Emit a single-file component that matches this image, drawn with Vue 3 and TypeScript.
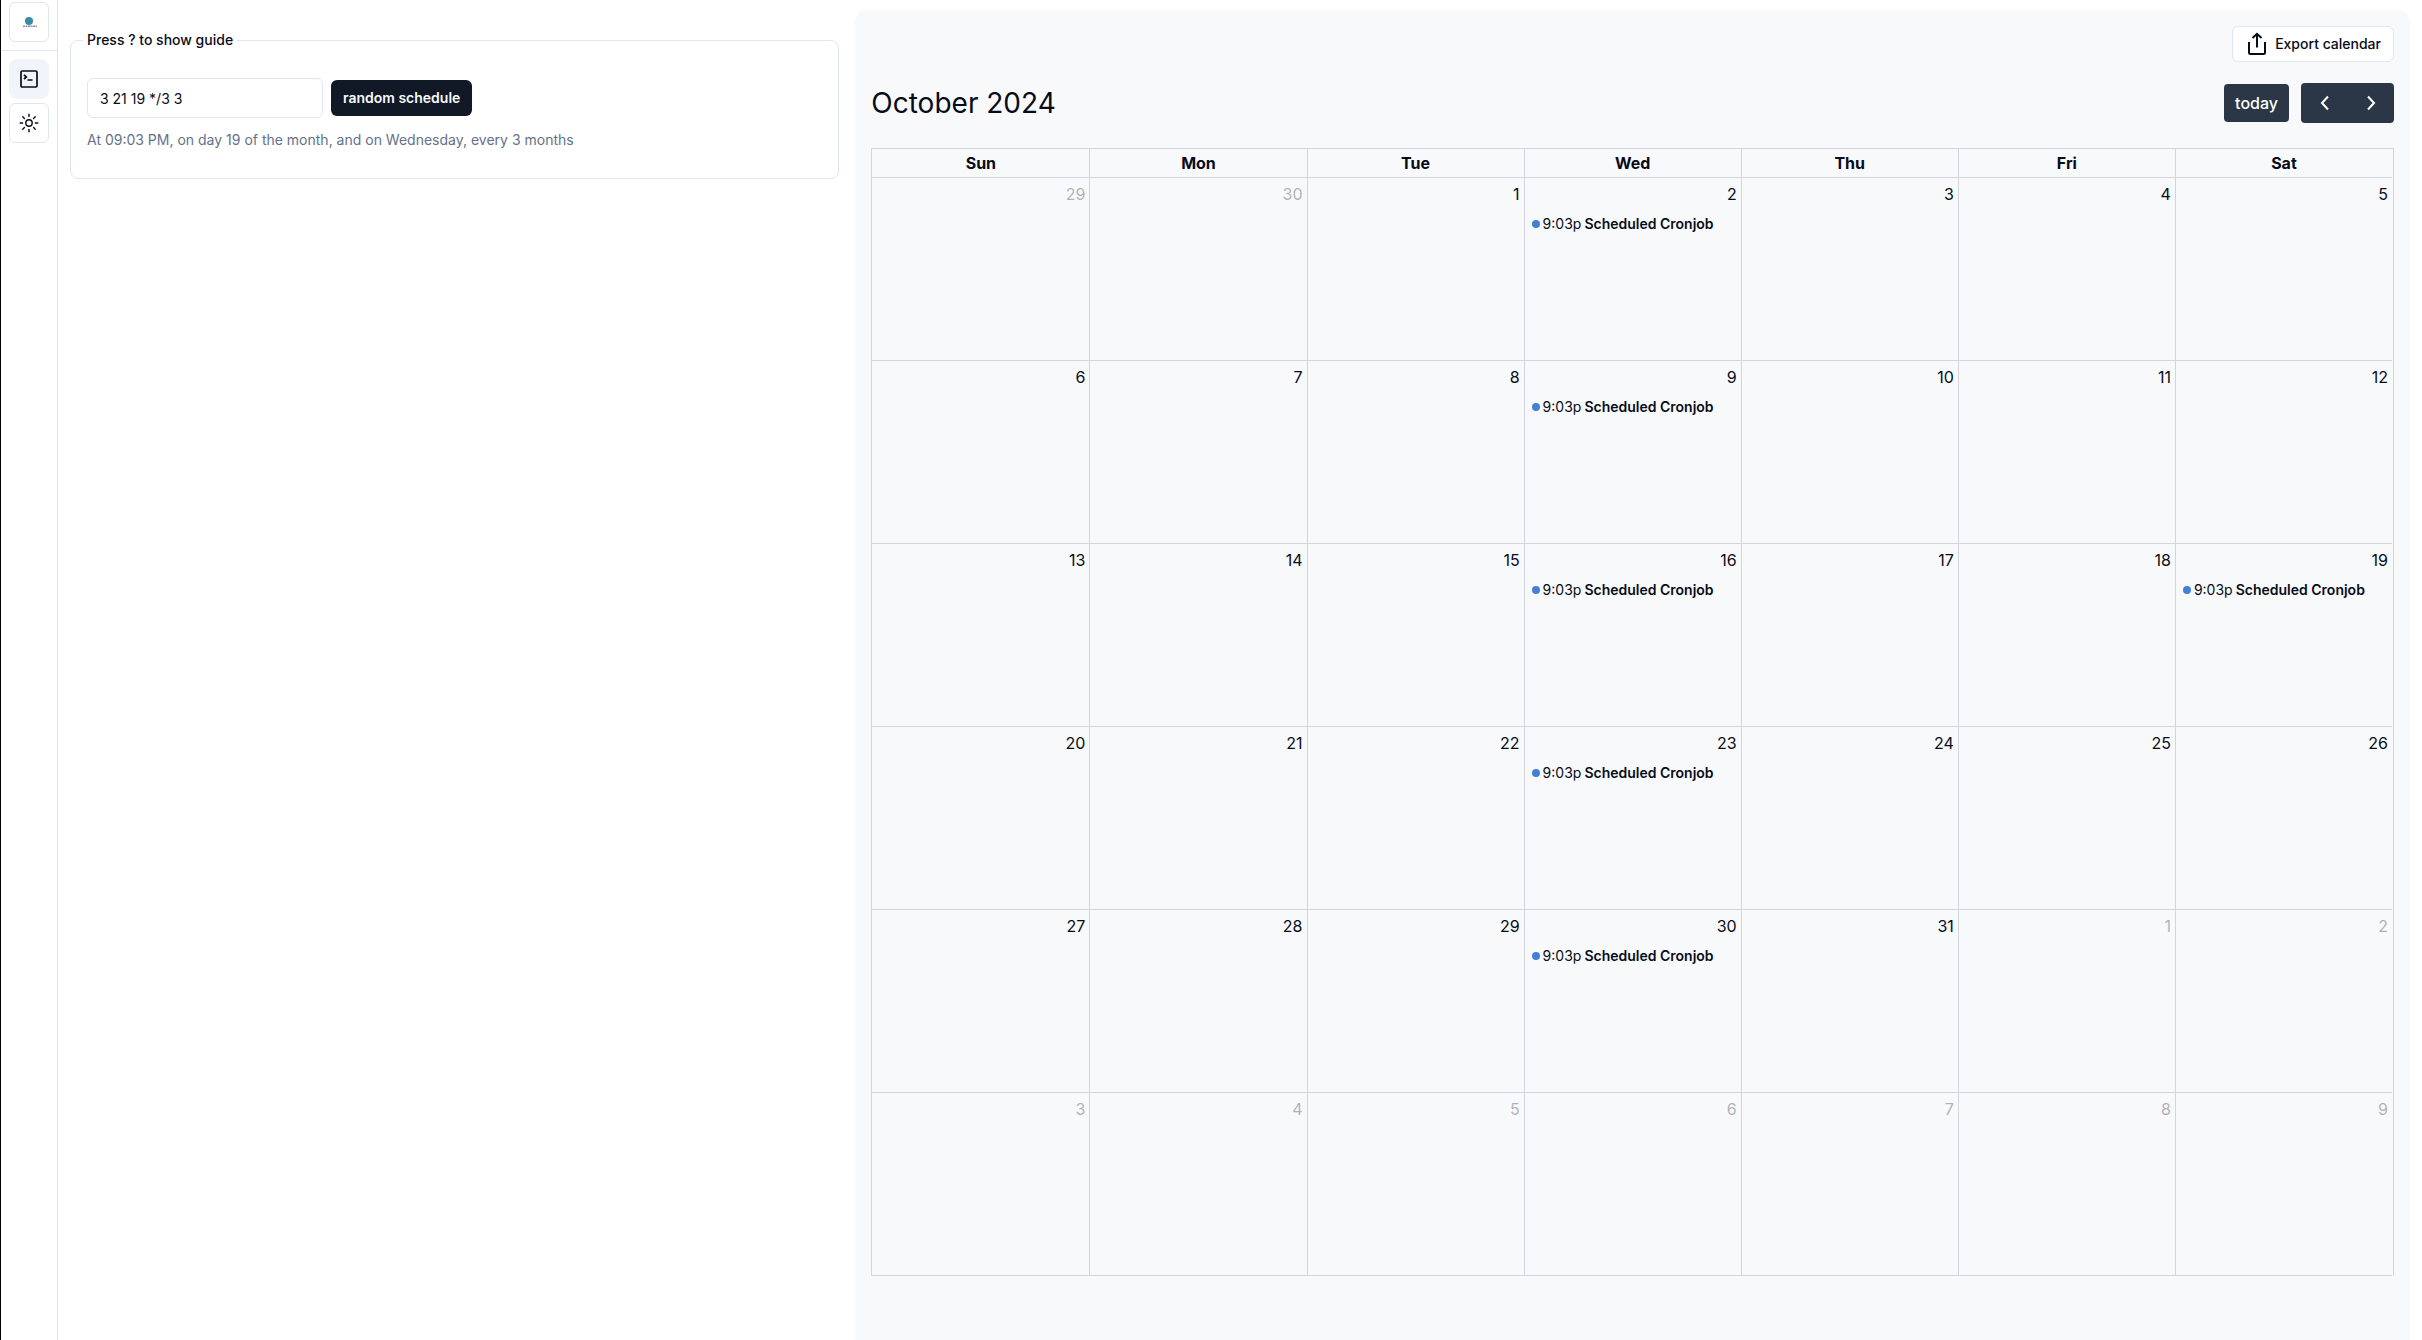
<script setup lang="ts">
import { computed, ref } from 'vue'

interface Day {
  key: string
  label: number
  outside: boolean
  scheduled: boolean
}

const weekdays = ['Sun', 'Mon', 'Tue', 'Wed', 'Thu', 'Fri', 'Sat']
const monthNames = ['January', 'February', 'March', 'April', 'May', 'June', 'July',
  'August', 'September', 'October', 'November', 'December']

const expression = ref('3 21 19 */3 3')
const description = 'At 09:03 PM, on day 19 of the month, and on Wednesday, every 3 months'
const current = ref(new Date(2024, 9, 1))

const title = computed(() => `${monthNames[current.value.getMonth()]} ${current.value.getFullYear()}`)

const weeks = computed<Day[][]>(() => {
  const year = current.value.getFullYear()
  const month = current.value.getMonth()
  const offset = new Date(year, month, 1).getDay()
  return Array.from({ length: 6 }, (_, w) =>
    Array.from({ length: 7 }, (_, d) => {
      const date = new Date(year, month, 1 - offset + w * 7 + d)
      const inCycle = date.getMonth() % 3 === 0
      return {
        key: date.toDateString(),
        label: date.getDate(),
        outside: date.getMonth() !== month,
        scheduled: inCycle && (date.getDay() === 3 || date.getDate() === 19),
      }
    }),
  )
})

function shift(months: number) {
  current.value = new Date(current.value.getFullYear(), current.value.getMonth() + months, 1)
}

function today() {
  const now = new Date()
  current.value = new Date(now.getFullYear(), now.getMonth(), 1)
}

function randomSchedule() {
  const pick = (n: number) => Math.floor(Math.random() * n)
  expression.value = `${pick(60)} ${pick(24)} ${pick(28) + 1} */${pick(5) + 1} ${pick(7)}`
}
</script>

<template>
  <div class="app">
    <aside class="sidebar">
      <div class="brand">
        <button class="icon-button" type="button" aria-label="Home">
          <svg width="20" height="20" viewBox="0 0 20 20">
            <circle cx="10" cy="9" r="4" fill="#3a8aa8" />
            <path d="M4 14.2h14" stroke="#8d9499" stroke-width="1.4" stroke-dasharray="2 .5" />
          </svg>
        </button>
      </div>
      <nav class="tools">
        <button class="icon-button active" type="button" aria-label="Editor">
          <svg width="20" height="20" viewBox="0 0 20 20" fill="none" stroke="currentColor" stroke-width="1.7">
            <rect x="2" y="2" width="16" height="16" rx="1.2" />
            <path d="M5 5.8l2.3 2.1L5 10M8.5 11h5" />
          </svg>
        </button>
        <button class="icon-button" type="button" aria-label="Toggle theme">
          <svg width="20" height="20" viewBox="0 0 20 20" fill="none" stroke="currentColor" stroke-width="1.4" stroke-linecap="round">
            <circle cx="10" cy="10" r="3.2" />
            <path d="M10 1.2v2.4M10 16.4v2.4M1.2 10h2.4M16.4 10h2.4M3.8 3.8l1.6 1.6M14.6 14.6l1.6 1.6M3.8 16.2l1.6-1.6M14.6 5.4l1.6-1.6" />
          </svg>
        </button>
      </nav>
    </aside>

    <main class="content">
      <form class="editor" @submit.prevent>
        <fieldset class="card">
          <legend>Press ? to show guide</legend>
          <div class="row">
            <input v-model="expression" class="field" type="text" aria-label="Cron expression" />
            <button class="primary" type="button" @click="randomSchedule">random schedule</button>
          </div>
          <p class="description">{{ description }}</p>
        </fieldset>
      </form>

      <section class="panel">
        <button class="export" type="button">
          <svg width="20" height="24" viewBox="0 0 20 24" fill="none" stroke="currentColor" stroke-width="2">
            <path d="M2 10v10.5a1.5 1.5 0 0 0 1.500 1.500h13a1.500 1.500 0 0 0 1.500-1.500V10M10 15.500V2M5.500 6 10 1.800 14.500 6" />
          </svg>
          Export calendar
        </button>

        <header class="toolbar">
          <h2>{{ title }}</h2>
          <div class="controls">
            <button class="today" type="button" @click="today">today</button>
            <div class="pager">
              <button type="button" aria-label="Previous month" @click="shift(-1)">
                <svg width="10" height="16" viewBox="0 0 10 16"><path d="M8 1.500 2 8l6 6.500" /></svg>
              </button>
              <button type="button" aria-label="Next month" @click="shift(1)">
                <svg width="10" height="16" viewBox="0 0 10 16"><path d="M2 1.500 8 8l-6 6.500" /></svg>
              </button>
            </div>
          </div>
        </header>

        <div class="frame">
          <table class="calendar">
            <thead>
              <tr>
                <th v-for="name in weekdays" :key="name" scope="col">{{ name }}</th>
              </tr>
            </thead>
            <tbody>
              <tr v-for="(week, i) in weeks" :key="i">
                <td v-for="day in week" :key="day.key">
                  <div class="number" :class="{ outside: day.outside }">{{ day.label }}</div>
                  <a v-if="day.scheduled" class="event" href="#">
                    <span class="dot"></span>
                    <span>9:03p</span>
                    <strong>Scheduled Cronjob</strong>
                  </a>
                </td>
              </tr>
            </tbody>
          </table>
        </div>
      </section>
    </main>
  </div>
</template>

<style>
body {
  background: #fff;
}
</style>

<style scoped>
.app,
.app * {
  box-sizing: border-box;
}

.app {
  display: flex;
  min-height: 100vh;
  border-left: 1px solid #000;
  color: #080c18;
  font-family: Inter, "Liberation Sans", sans-serif;
  font-size: 14px;
  line-height: 20px;
}

button,
input {
  font: inherit;
  color: inherit;
}

button {
  display: flex;
  align-items: center;
  justify-content: center;
  padding: 0;
  border: 0;
  cursor: pointer;
}

.sidebar {
  flex: none;
  width: 57px;
  border-right: 1px solid #e0e4ee;
}

.brand {
  display: flex;
  justify-content: center;
  padding: 2px 8px 8px;
  border-bottom: 1px solid #e0e6ee;
}

.tools {
  display: grid;
  gap: 4px;
  padding: 8px;
}

.icon-button {
  width: 40px;
  height: 40px;
  border: 1px solid #e0e6ee;
  border-radius: 6px;
  background: #fff;
}

.icon-button.active {
  border-color: #f1f4f9;
  border-radius: 8px;
  background: #f1f4f9;
}

.content {
  flex: 1;
  display: grid;
  grid-template-columns: repeat(3, minmax(0, 1fr));
  gap: 16px;
  padding: 10px 12px 0;
}

.editor {
  padding-top: 20px;
}

.card {
  min-width: 0;
  margin: 0;
  padding: 28px 16px;
  border: 1px solid #e0e6ee;
  border-radius: 8px;
}

legend {
  margin-left: -4px;
  padding: 0 4px;
  font-weight: 500;
}

.row {
  display: flex;
  align-items: center;
  gap: 8px;
}

.field {
  width: 236px;
  height: 40px;
  padding: 8px 12px;
  border: 1px solid #e0e6ee;
  border-radius: 6px;
  background: #fff;
}

.primary {
  height: 36px;
  padding: 0 12px;
  border-radius: 6px;
  background: #111826;
  color: #f8fafc;
  font-weight: 600;
}

.description {
  margin: 12px 0 0;
  color: #64728a;
}

.panel {
  grid-column: span 2;
  padding: 16px;
  border-radius: 12px 12px 0 0;
  background: #f8f9fb;
}

.export {
  gap: 8px;
  height: 36px;
  margin-left: auto;
  padding: 0 12px 0 14px;
  border: 1px solid #e0e6ee;
  border-radius: 6px;
  background: #fff;
  font-weight: 500;
}

.toolbar {
  display: flex;
  align-items: center;
  justify-content: space-between;
  margin: 21px 0 25px;
}

h2 {
  margin: 0;
  font-size: 28px;
  line-height: 40px;
  font-weight: 400;
}

.controls {
  display: flex;
  align-items: center;
  gap: 12px;
}

.today {
  height: 38px;
  padding: 0 11px;
  border-radius: 4px;
  background: #2b3747;
  color: #fff;
  font-size: 16px;
  font-weight: 500;
}

.pager {
  display: flex;
  border-radius: 4px;
  background: #2b3747;
}

.pager button {
  width: 47px;
  height: 40px;
  background: transparent;
}

.pager button + button {
  margin-left: -1px;
}

.pager path {
  fill: none;
  stroke: #fff;
  stroke-width: 2;
}

.frame {
  padding-right: 1px;
  border: 1px solid #d4d5d8;
  border-bottom: 0;
}

.calendar {
  width: 100%;
  border-spacing: 0;
  table-layout: fixed;
  font-size: 16px;
}

th,
td {
  padding: 0;
  border-left: 1px solid #d4d5d8;
  border-bottom: 1px solid #d4d5d8;
}

th:first-child,
td:first-child {
  border-left: 0;
}

th {
  height: 29px;
  font-weight: 700;
}

td {
  height: 183px;
  vertical-align: top;
}

.number {
  padding: 6px 4px 0;
  text-align: right;
}

.number.outside {
  opacity: 0.3;
}

.event {
  display: flex;
  align-items: center;
  gap: 3px;
  margin-top: 10px;
  padding-left: 7px;
  color: inherit;
  font-size: 14px;
  text-decoration: none;
  white-space: nowrap;
}

.event strong {
  font-weight: 600;
}

.dot {
  width: 8px;
  height: 8px;
  border-radius: 4px;
  background: #437fd6;
}
</style>
